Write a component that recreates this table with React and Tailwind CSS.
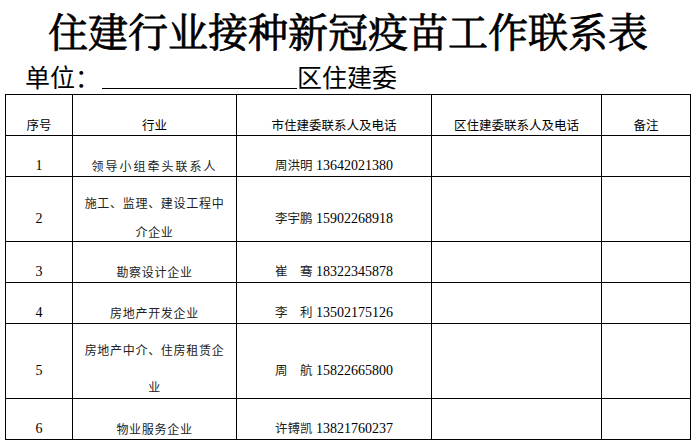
import React from 'react'

const cjk = "font-['Noto_Sans_CJK_SC',sans-serif]"
const serif = "font-['Liberation_Serif','Noto_Sans_CJK_SC',serif]"

const rows = [
    { no: '1', h: 'h-[41px]', industry: ['领导小组牵头联系人'], wide: true, name: '周洪明', phone: '13642021380', pb: 'pb-[2px]' },
    { no: '2', h: 'h-[65px]', industry: ['施工、监理、建设工程中', '介企业'], gap: 'gap-[13px]', ipb: 'pb-[1px]', name: '李宇鹏', phone: '15902268918', pb: 'pb-[14px]' },
    { no: '3', h: 'h-[41px]', industry: ['勘察设计企业'], name: '崔　骞', phone: '18322345878', pb: 'pb-[2px]' },
    { no: '4', h: 'h-[41px]', industry: ['房地产开发企业'], name: '李　利', phone: '13502175126', pb: 'pb-[2px]' },
    { no: '5', h: 'h-[75px]', industry: ['房地产中介、住房租赁企', '业'], gap: 'gap-[21px]', ipb: 'pb-[3px]', name: '周　航', phone: '15822665800', pb: 'pb-[19px]' },
    { no: '6', h: 'h-[41px]', industry: ['物业服务企业'], name: '许镈凯', phone: '13821760237', pb: 'pb-[2px]' },
]

function Cell({ className = '', children }) {
    return (
        <div className={'border-r border-b border-black flex flex-col items-center justify-end ' + className}>
            {children}
        </div>
    )
}

export default function App() {
    return (
        <div className="w-[696px] h-[443px] bg-white text-black overflow-hidden">
            <h1 className={"h-[58px] text-center text-[40px] leading-[60px] font-normal [-webkit-text-stroke:0.8px_black] " + "font-['Noto_Serif_CJK_SC','Noto_Sans_CJK_SC',serif]"}>
                住建行业接种新冠疫苗工作联系表
            </h1>

            <div className={'h-[36px] flex items-end pl-[25px] pb-[3px] text-[25px] leading-[30px] ' + cjk}>
                <span>单位：</span>
                <span className="inline-block w-[195px] h-[20px] ml-[2px] mb-[2px] border-b border-black"></span>
                <span>区住建委</span>
            </div>

            <div className="ml-[5px] w-[686px] border-t border-l border-black grid grid-cols-[67px_164px_195px_170px_89px]">
                {['序号', '行业', '市住建委联系人及电话', '区住建委联系人及电话', '备注'].map(t => (
                    <Cell key={t} className={'h-[41px] pb-[2px] ' + cjk}>
                        <span className="text-[12.5px] leading-[16px]">{t}</span>
                    </Cell>
                ))}

                {rows.map(r => (
                    <React.Fragment key={r.no}>
                        <Cell className={r.h + ' ' + r.pb + ' ' + serif}>
                            <span className="text-[14px] leading-[16px]">{r.no}</span>
                        </Cell>
                        <Cell className={r.h + ' ' + (r.ipb || 'pb-[2px]') + ' ' + (r.gap || '') + ' ' + cjk}>
                            {r.industry.map(l => (
                                <span key={l} className={'text-[12px] leading-[16px] text-[#222] ' + (r.wide ? 'tracking-[2px]' : 'tracking-[0.7px]')}>{l}</span>
                            ))}
                        </Cell>
                        <Cell className={r.h + ' ' + r.pb}>
                            <span className="leading-[16px] whitespace-pre">
                                <span className={'text-[12.5px] text-[#222] ' + cjk}>{r.name}</span>
                                <span className={'text-[14px] ' + serif}> {r.phone}</span>
                            </span>
                        </Cell>
                        <Cell className={r.h}></Cell>
                        <Cell className={r.h}></Cell>
                    </React.Fragment>
                ))}
            </div>
        </div>
    )
}
